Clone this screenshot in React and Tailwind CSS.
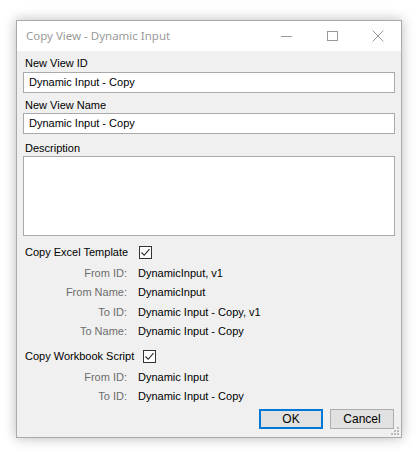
import React from 'react';

const ui = { fontFamily: '"Liberation Sans", Arial, sans-serif' };
const title = { fontFamily: '"Noto Sans", "Open Sans", sans-serif' };

const CheckBox = () => (
  <span className="inline-flex h-[13px] w-[13px] items-center justify-center border border-[#333] bg-white">
    <svg width="11" height="11" viewBox="0 0 11 11">
      <path d="M1.5 5.5 L4.2 8.3 L9.5 2.2" fill="none" stroke="#222" strokeWidth="1.1" />
    </svg>
  </span>
);

const InfoRow = ({ label, value }) => (
  <div className="flex h-[19.5px] items-center">
    <span className="w-[104px] text-right text-[#6d6d6d]">{label}</span>
    <span className="ml-[11px] text-black">{value}</span>
  </div>
);

const TextBox = ({ value }) => (
  <div className="flex h-[21px] items-center border border-[#a9a9a9] bg-white px-[5px]">
    {value}
  </div>
);

const Gripper = () => (
  <svg width="9" height="9" viewBox="0 0 9 9" className="absolute bottom-[2px] right-[2px]">
    {[
      [7, 1], [4, 4], [7, 4], [1, 7], [4, 7], [7, 7],
    ].map(([x, y]) => (
      <rect key={`${x}-${y}`} x={x} y={y} width="2" height="2" fill="#bcbcbc" />
    ))}
  </svg>
);

export default function App() {
  return (
    <div className="h-[459px] w-[420px] bg-white pl-4 pt-5">
      <div className="relative flex h-[418px] w-[386px] flex-col border border-[#aaaaaa] bg-[#f0f0f0] shadow-[0_0_12px_rgba(0,0,0,0.28)]">
        {/* title bar */}
        <div className="flex h-[30px] items-center bg-white">
          <span style={title} className="ml-[9px] text-[11.5px] text-[#9a9a9a]">
            Copy View - Dynamic Input
          </span>
          <div className="ml-auto flex items-center">
            <div className="flex h-[30px] w-[46px] items-center justify-center">
              <svg width="11" height="11" viewBox="0 0 11 11">
                <path d="M0 5.5 H11" stroke="#999" strokeWidth="1" />
              </svg>
            </div>
            <div className="flex h-[30px] w-[46px] items-center justify-center">
              <svg width="11" height="11" viewBox="0 0 11 11">
                <rect x="0.5" y="0.5" width="10" height="9" fill="none" stroke="#999" strokeWidth="1" />
              </svg>
            </div>
            <div className="flex h-[30px] w-[46px] items-center justify-center">
              <svg width="12" height="12" viewBox="0 0 12 12">
                <path d="M0.5 0.5 L11.5 11.5 M11.5 0.5 L0.5 11.5" stroke="#999" strokeWidth="1" />
              </svg>
            </div>
          </div>
        </div>

        {/* form */}
        <div style={ui} className="flex flex-1 flex-col px-[6px] pt-[4px] text-[11px] text-black">
          <div className="flex h-4 items-center pl-[2px]">New View ID</div>
          <div className="mt-px">
            <TextBox value="Dynamic Input - Copy" />
          </div>
          <div className="mt-1 flex h-4 items-center pl-[2px]">New View Name</div>
          <TextBox value="Dynamic Input - Copy" />
          <div className="mt-[6px] flex h-4 items-center pl-[2px]">Description</div>
          <div className="h-[80px] border border-[#a9a9a9] bg-white" />

          <div className="mt-2 flex h-4 items-center pl-[2px]">
            <span>Copy Excel Template</span>
            <span className="ml-[11px] flex">
              <CheckBox />
            </span>
          </div>
          <div className="mt-[3px]">
            <InfoRow label="From ID:" value="DynamicInput, v1" />
            <InfoRow label="From Name:" value="DynamicInput" />
            <InfoRow label="To ID:" value="Dynamic Input - Copy, v1" />
            <InfoRow label="To Name:" value="Dynamic Input - Copy" />
          </div>

          <div className="mt-[7px] flex h-4 items-center pl-[2px]">
            <span>Copy Workbook Script</span>
            <span className="ml-[9px] flex">
              <CheckBox />
            </span>
          </div>
          <div className="mt-[3px]">
            <InfoRow label="From ID:" value="Dynamic Input" />
            <InfoRow label="To ID:" value="Dynamic Input - Copy" />
          </div>

          <div className="mt-[3px] flex justify-end gap-[7px] pr-px">
            <button className="h-[20px] w-[64px] border-2 border-[#0078d7] bg-[#e1e1e1] text-[12px] leading-none">
              OK
            </button>
            <button className="h-[20px] w-[64px] border border-[#adadad] bg-[#e1e1e1] text-[12px] leading-none">
              Cancel
            </button>
          </div>
        </div>
        <Gripper />
      </div>
    </div>
  );
}
